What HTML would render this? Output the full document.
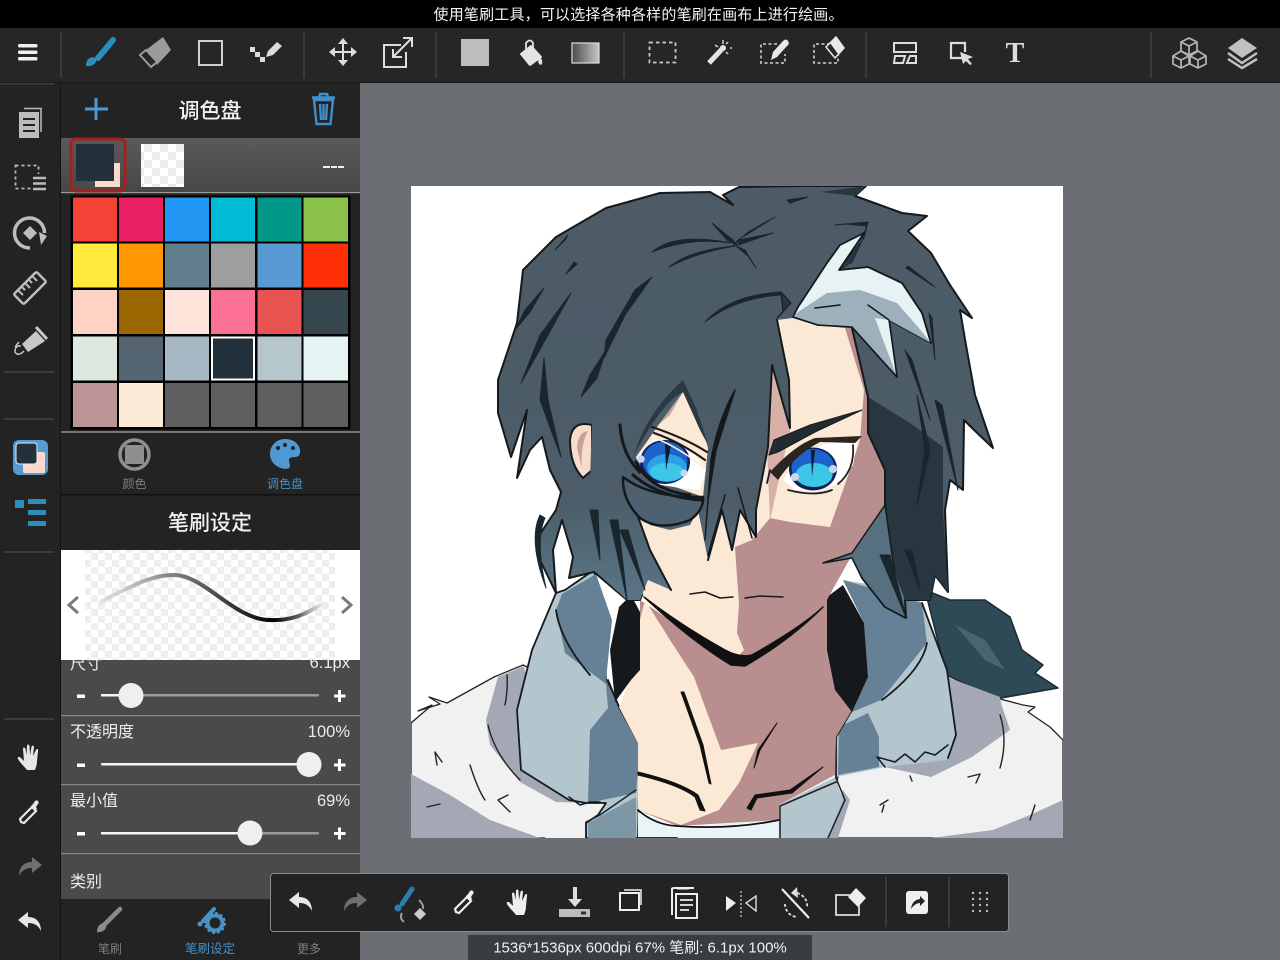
<!DOCTYPE html>
<html><head><meta charset="utf-8"><title>Paint</title>
<style>
html,body{margin:0;padding:0;background:#6b6f74;overflow:hidden}
svg{display:block}
text{font-family:"Liberation Sans","Noto Sans CJK SC",sans-serif}
</style></head><body>
<svg xmlns="http://www.w3.org/2000/svg" width="1280" height="960" viewBox="0 0 1280 960">
<defs>
<pattern id="chk" width="16" height="16" patternUnits="userSpaceOnUse"><rect width="16" height="16" fill="#fff"/><rect width="8" height="8" fill="#ececec"/><rect x="8" y="8" width="8" height="8" fill="#ececec"/></pattern>
<pattern id="chk2" width="14" height="14" patternUnits="userSpaceOnUse"><rect width="14" height="14" fill="#fff"/><rect width="7" height="7" fill="#eeeef2"/><rect x="7" y="7" width="7" height="7" fill="#eeeef2"/></pattern>
<linearGradient id="rowg" x1="0" x2="0" y1="0" y2="1"><stop offset="0" stop-color="#5a5a5a"/><stop offset="1" stop-color="#474747"/></linearGradient>
<linearGradient id="gradi" x1="0" x2="1" y1="0" y2="0"><stop offset="0" stop-color="#4a4a4a"/><stop offset="1" stop-color="#c8c8c8"/></linearGradient>
<linearGradient id="strk" gradientUnits="userSpaceOnUse" x1="100" x2="322" y1="0" y2="0"><stop offset="0" stop-color="#ccc" stop-opacity=".5"/><stop offset=".3" stop-color="#888"/><stop offset=".55" stop-color="#444"/><stop offset=".78" stop-color="#000"/><stop offset=".9" stop-color="#666"/><stop offset="1" stop-color="#ccc" stop-opacity=".5"/></linearGradient>
<linearGradient id="hairg" gradientUnits="userSpaceOnUse" x1="0" x2="0" y1="186" y2="620"><stop offset="0" stop-color="#4c5b66"/><stop offset=".72" stop-color="#4c5c68"/><stop offset="1" stop-color="#5c7b8c"/></linearGradient>
<clipPath id="art"><rect x="411" y="186" width="652" height="652"/></clipPath>
<symbol id="undo" viewBox="-14 -14 28 28" overflow="visible"><path d="M-12,-2 L-2,-10 L-2,-5 C6,-5 11,0 11,9 C8,3 4,1 -2,1 L-2,6 Z" fill="currentColor"/></symbol>
<symbol id="hand" viewBox="-14 -14 28 28" overflow="visible"><path d="M-3,13 C-6,9 -9,7 -12,2 C-13,0 -11,-1 -9,1 L-6,4 L-7,-8 C-7,-10 -5,-10 -4.500,-8 L-3.500,-2 L-3,-11 C-3,-13 -.5,-13 -.5,-11 L0,-2 L1.500,-10 C2,-12 4,-11.500 4,-10 L3,-1 L6,-7 C7,-9 8.500,-8 8,-6 L7,4 C7,8 6,10 5,13 Z" fill="currentColor"/></symbol>
<symbol id="drop" viewBox="-14 -14 28 28" overflow="visible"><path d="M-9,10 L-10,7 L2,-5 L6,-1 L-6,11 Z" fill="none" stroke="currentColor" stroke-width="2.200"/><path d="M1,-6 L3,-8 L5,-11 C7,-13 10,-10 8,-8 L6,-5 L7,-3 L5,-1 Z" fill="currentColor"/></symbol>
</defs>

<rect width="1280" height="960" fill="#6b6f74"/>
<!-- ARTWORK -->
<g clip-path="url(#art)" stroke-linejoin="round" stroke-linecap="round">
<rect x="411" y="186" width="652" height="652" fill="#fff"/>
<!-- tail -->
<path d="M925,590 L950,600 L985,600 L1010,617 L1022,650 L1043,665 L1035,673 L1058,688 L1001,698 L972,690 L947,677 Z" fill="#2f4a57" stroke="#1d2a30" stroke-width="1.500"/>
<path d="M955,625 L985,640 L1005,670 L985,660 Z" fill="#4a6572"/>
<!-- left fur -->
<path d="M411,723 L432,705 L418,711 L440,704 L429,697 L447,703 L494,677 L523,665 L600,700 L640,838 L411,838 Z" fill="#f1f1f1" stroke="#222" stroke-width="1.300"/>
<path d="M411,774 L450,795 L490,820 L540,838 L411,838 Z" fill="#a4a8b4"/>
<path d="M498,677 L524,666 L530,700 L521,770 L569,800 L590,803 L556,802 L520,782 L490,745 L486,720 Z" fill="#a5a9b6"/>
<path d="M560,808 L600,803 L586,838 L545,838 Z" fill="#f1f1f1"/>
<!-- right fur -->
<path d="M940,672 L993,697 L1023,705 L1035,707 L1028,712 L1050,727 L1063,740 L1063,838 L830,838 L838,775 Z" fill="#f1f1f1" stroke="#222" stroke-width="1.300"/>
<path d="M947,677 L1000,697 L1001,703 L1010,730 L972,757 L931,777 L885,767 L945,745 Z" fill="#a5a9b6"/>
<path d="M1063,800 L1030,815 L993,830 L931,838 L1063,838 Z" fill="#a4a8b4"/>
<path d="M843,790 L850,800 L838,838 L825,838 Z" fill="#a4a8b4"/>
<!-- hood left -->
<path d="M594,570 L565,590 L556,593 L532,650 L517,710 L521,770 L569,800 L586,803 L606,803 L598,815 L586,823 L586,838 L640,838 L640,745 L619,707 L606,680 L604,620 Z" fill="#b3c6cd" stroke="#151a1e" stroke-width="1.800"/>
<path d="M596,574 L562,594 L556,610 L565,653 L606,684 L608,708 L590,730 L588,803 L636,793 L640,745 L619,707 L606,680 L612,620 Z" fill="#668095"/>
<path d="M588,823 L636,797 L636,838 L588,838 Z" fill="#7d97a6"/>
<path d="M556,610 Q560,640 590,675 M608,680 L619,707 L640,745 L638,838" fill="none" stroke="#151a1e" stroke-width="1.800"/>
<!-- hood right -->
<path d="M843,580 L905,590 L922,603 L947,670 L956,730 L947,760 L885,767 L836,777 L836,727 L868,677 L864,623 Z" fill="#b3c6cd"/>
<path d="M843,580 L922,603 L927,643 L881,700 L852,712 L868,677 L864,623 Z" fill="#668095"/>
<path d="M839,727 L868,713 L879,737 L879,767 L838,775 Z" fill="#668095"/>
<path d="M922,603 L947,670 L956,735 L948,758 M927,643 Q922,670 882,700 M852,710 L836,737 L836,778" fill="none" stroke="#151a1e" stroke-width="1.800"/>
<!-- neck -->
<path d="M640,600 L640,670 L619,707 L638,743 L638,810 L677,826 L779,820 L779,805 L835,775 L836,737 L852,710 L830,650 L827,600 L760,640 L700,640 Z" fill="#b88e8e"/>
<path d="M645,600 L670,640 L694,677 L721,750 L758,743 L739,783 L719,810 L681,825 L638,810 L638,743 L619,707 L634,670 L640,620 Z" fill="#fce9d5"/>
<path d="M638,812 L677,827 L779,820 L779,838 L638,838 Z" fill="#e8f4f5"/>
<path d="M779,805 L835,777 L843,800 L827,838 L779,838 Z" fill="#b3c6cd"/>
<path d="M836,782 L780,806 L780,838 M836,778 L845,800 L828,838 M636,790 L600,815 L586,822 L586,838" fill="none" stroke="#1a2226" stroke-width="1.500"/>
<path d="M885,767 L877,757 L895,762 L905,754 L915,762 L925,752 L935,755 L948,745 M569,797 L580,805 L590,802 L600,802" fill="none" stroke="#151a1e" stroke-width="1.500"/>
<path d="M638,810 Q655,825 677,826 Q730,830 779,820 M638,838 L677,838" fill="none" stroke="#111" stroke-width="1.800"/>
<!-- black inner hood -->
<path d="M619,607 L610,650 L615,702 L631,680 L640,670 L640,612 L631,595 Z" fill="#15191c"/>
<path d="M827,597 L827,650 L835,690 L852,712 L868,677 L864,623 L843,585 Z" fill="#15191c"/>
<!-- neck lines -->
<path d="M681,692 L700,745 L709,783 L711,784 L703,745 L684,692 Z M777,723 L758,750 L754,768 L760,750 Z M638,775 Q680,785 695,797 L700,810 L705,811 L698,795 Q680,782 638,772 Z M823,767 L790,790 L755,795 L747,808 L751,810 L757,798 L792,793 Z" fill="#111" stroke="#111" stroke-width="1"/>
<path d="M437,765 L435,752 L442,762 M470,765 Q478,790 485,800 M508,795 L498,800 L510,812 M427,807 L440,804 M488,725 Q495,755 520,780 M507,675 Q508,690 505,705 M1000,715 Q1008,740 1000,768 M968,777 L980,774 L976,783 M880,805 L888,800 M884,805 L882,812 M1035,805 L1030,820 M910,776 L912,781" fill="none" stroke="#222" stroke-width="1.400"/>
<!-- hair silhouette -->
<path d="M710,192 L733,205 L723,195 L739,187 L800,186 L866,186 L855,196 L880,205 L902,213 L927,216 L908,231 L931,253 L950,285 L972,318 L960,310 L966,345 L975,395 L993,448 L972,428 L964,420 L963,490 L950,480 L945,510 L948,592 L935,575 L930,600 L905,600 L906,618 L885,607 L862,578 L852,556 L700,560 L671,590 L648,580 L640,600 L627,600 L594,572 L569,578 L573,557 L562,520 L553,550 L556,593 L540,560 L538,537 L556,510 L561,492 L550,470 L542,437 L530,450 L517,478 L527,410 L511,457 L498,413 L498,380 L517,323 L523,270 L556,237 L606,208 L660,193 Z" fill="url(#hairg)" stroke="#15191c" stroke-width="2"/>
<!-- dark right -->
<path d="M868,397 L910,423 L943,447 L943,510 L948,592 L935,575 L930,600 L905,600 L890,560 L868,500 L885,470 L868,433 Z" fill="#27363f"/>
<path d="M820,192 L866,186 L856,196 Z" fill="#27363f"/>
<!-- face -->
<path d="M777,320 L793,318 L818,325 L852,328 L868,395 L868,433 L885,470 L885,510 L852,555 L823,607 L745,665 L728,662 L644,597 L620,540 L640,400 L700,380 Z" fill="#b88e8e"/>
<path d="M777,320 L793,318 L818,325 L845,328 L864,390 L860,440 L850,470 L843,490 L830,527 L790,522 L770,518 L752,540 L735,547 L737,577 L739,603 L737,633 L744,650 L735,660 L644,597 L630,540 L650,500 L700,400 Z" fill="#fce9d5"/>
<path d="M777,320 L783,360 L790,430 L770,520 L765,400 Z" fill="#d7b0a8"/>
<!-- ear -->
<path d="M592,425 Q572,420 570,440 Q570,465 583,478 L592,470 Z" fill="#f7dccb" stroke="#15191c" stroke-width="2"/>
<path d="M577,448 Q578,432 588,431 Q580,445 582,468 Z" fill="#c9a09a"/>
<!-- bangs -->
<path d="M777,320 L789,380 L790,428 L772,365 L768,447 L756,510 L756,537 L740,510 L732,550 L722,510 L708,560 L698,510 L690,525 L670,530 L650,525 L632,500 L650,550 L671,590 L648,580 L640,600 L627,600 L596,572 L590,480 L592,420 L600,350 L680,300 L770,300 Z" fill="url(#hairg)"/>
<path d="M777,320 L789,380 L790,428 L772,365 L768,447 L756,510 L756,537 L740,510 L732,550 L722,510 L708,560 M671,590 L650,550 L632,500" fill="none" stroke="#15191c" stroke-width="2"/>
<path d="M777,318 L791,303 L781,292 L783,312 Z" fill="#27363f" stroke="#15191c" stroke-width="1"/>
<!-- right face edge -->
<path d="M852,328 L868,397 L868,433 L885,470 L885,510" fill="none" stroke="#15191c" stroke-width="2"/>
<path d="M885,505 L852,553 L823,563 L852,558 L862,578 L885,607 L906,618 L895,575 L890,540 Z" fill="#567080" stroke="#15191c" stroke-width="1.500"/>
<!-- left eye opening -->
<path d="M683,392 L660,423 L636,457 L656,480 L703,497 L708,448 L698,413 Z" fill="#fce9d5"/>
<path d="M683,392 L660,423 L650,432 L670,415 Z" fill="#c8a49c"/>
<path d="M683,392 Q662,402 634,455 L640,438 Q655,405 683,380 L697,410 L708,445 L700,430 Z" fill="#2a3a44"/>
<path d="M636,458 L655,438 L692,450 L706,470 L700,490 L680,488 L655,484 Z" fill="#fff"/>
<ellipse cx="665" cy="462" rx="25" ry="22" fill="#101f55"/>
<ellipse cx="665" cy="461" rx="22.500" ry="19.500" fill="#1e62cc"/>
<ellipse cx="667" cy="468" rx="20" ry="14" fill="#2ea0e4"/>
<ellipse cx="667" cy="472" rx="17" ry="9" fill="#3cc6e8"/>
<path d="M665,442 L671,445 L666,470 Z" fill="#101a30"/>
<circle cx="641" cy="459" r="3.800" fill="#ccd6e6"/><circle cx="684" cy="473" r="3.500" fill="#ccd6e6"/>
<path d="M652,427 Q685,438 707,452 M654,433 Q680,442 705,460" fill="none" stroke="#1f1a18" stroke-width="2.200"/>
<path d="M655,438 Q680,448 704,468" fill="none" stroke="#fbeed9" stroke-width="1.500"/>
<!-- eye patch -->
<path d="M623,477 Q650,498 703,497 Q704,510 690,520 Q660,532 640,518 Q622,500 623,477 Z" fill="#4e6170" stroke="#15191c" stroke-width="2.500"/>
<path d="M636,462 Q650,490 690,495 M620,425 Q622,455 640,472 M633,475 Q660,498 703,500" fill="none" stroke="#15191c" stroke-width="3"/>
<path d="M735,390 Q718,420 711,460 L705,540 L708,500 L716,450 Z M725,495 L708,555 M738,488 L752,538" fill="#15191c" stroke="#15191c" stroke-width="1.500"/>
<!-- right eye -->
<path d="M783,480 L800,455 L830,442 L857,443 L853,465 L840,483 L815,492 L795,490 Z" fill="#fff"/>
<ellipse cx="813" cy="469" rx="24" ry="21.500" fill="#101f55"/>
<ellipse cx="813" cy="468" rx="21.500" ry="19" fill="#1e62cc"/>
<ellipse cx="814" cy="475" rx="18.500" ry="12" fill="#3cc6e8"/>
<path d="M811,450 L815,450 L812,477 Z" fill="#101a30"/>
<circle cx="795" cy="477" r="4" fill="#ccd6e6"/><circle cx="833" cy="469" r="4" fill="#ccd6e6"/>
<path d="M769,455 L774,440 L810,425 L862,410 L815,432 L778,452 Z" fill="#232b30" stroke="#151a1e" stroke-width="1"/>
<path d="M770,472 Q795,445 815,438 L862,436 L855,443 L820,442 Q795,455 778,480" fill="#2b2522"/>
<path d="M853,445 Q855,470 838,484 M788,490 Q815,497 832,490 M770,470 L767,483" fill="none" stroke="#22201e" stroke-width="1.800"/>
<!-- hair lines: tapered strands -->
<g fill="#1a262d" stroke="#1a262d" stroke-width="1">
<path d="M652,252 Q675,232 731,243 Q690,237 652,252 Z"/>
<path d="M669,267 Q690,250 735,246 Q695,253 669,267 Z"/>
<path d="M712,223 L733,240 L737,245 L727,240 Z"/>
<path d="M775,217 L738,240 L733,246 L748,232 Z"/>
<path d="M773,233 L740,240 L738,245 Z"/>
<path d="M756,268 L745,250 L736,246 L748,256 Z"/>
<path d="M652,277 L635,290 L606,340 L604,358 L625,315 Z"/>
<path d="M606,350 L590,375 L581,397 L597,378 Z"/>
<path d="M544,288 L525,310 L515,330 L530,312 Z"/>
<path d="M571,293 L540,335 L521,383 L548,335 Z"/>
<path d="M544,358 L540,400 L561,457 L548,400 Z"/>
<path d="M565,240 L555,250 L568,235 Z"/>
<path d="M574,262 L566,274 L577,264 Z"/>
<path d="M705,322 Q730,295 781,292 L781,295 Q735,298 705,322 Z"/>
<path d="M906,268 L935,287 L908,266 Z"/>
<path d="M929,313 L935,360 L932,318 Z"/>
<path d="M835,225 L868,222 L866,226 L845,224 Z"/>
<path d="M868,222 L864,238 L839,270 L852,262 L860,245 Z" fill="#27363f"/>
<path d="M787,200 L808,197 L790,203 Z"/>
<path d="M905,350 L930,420 L912,360 Z"/>
<path d="M917,395 L925,450 L917,505 L930,450 Z"/>
<path d="M935,400 L958,490 L942,405 Z"/>
<path d="M905,550 L920,590 L912,550 Z"/>
<path d="M880,555 L905,615 L890,555 Z"/>
<path d="M610,520 L627,600 L618,520 Z"/>
<path d="M590,510 L600,560 L598,510 Z"/>
<path d="M620,530 L645,590 L628,530 Z"/>
<path d="M540,515 Q528,540 546,588 Q535,540 545,518 Z"/>
</g>
<!-- streak -->
<path d="M864,233 L840,245 L827,263 L798,307 L793,317 L818,325 L852,327 L897,377 L889,320 L931,343 L922,313 L902,283 L868,267 L839,270 Z" fill="#e6f2f3" stroke="#15191c" stroke-width="1.800"/>
<path d="M798,312 L827,293 L860,290 L897,303 L918,327 L931,343 L889,320 L897,377 L852,327 L818,325 L793,317 Z" fill="#9db0bb"/>
<path d="M897,377 L889,320 L875,318 L885,345 Z" fill="#e6f2f3"/>
<path d="M815,308 L840,305 M868,305 L889,320 M793,317 L818,325 L852,327 L897,377 L889,320 M840,270 L868,267 L902,283 L922,313 L931,343" fill="none" stroke="#15191c" stroke-width="1.500"/>
<!-- jaw -->
<path d="M644,597 Q690,640 731,665 L745,666 Q790,640 823,607 Q800,628 752,655 Q740,658 725,650 Q680,625 644,597 Z" fill="#111" stroke="#111" stroke-width="1.500"/>
<path d="M690,594 L705,592 L720,598 L733,597 M745,598 L760,596 L783,597" fill="none" stroke="#1a1a1a" stroke-width="1.500"/>
</g>

<!-- STATUS BAR + TOOLBAR -->
<rect width="1280" height="28" fill="#000"/>
<text x="638.500" y="19.500" text-anchor="middle" fill="#f5f5f5" font-size="15" textLength="410">使用笔刷工具，可以选择各种各样的笔刷在画布上进行绘画。</text>
<rect y="28" width="1280" height="54" fill="#262626"/>
<rect y="82" width="1280" height="1" fill="#1a1a1a"/>
<g fill="#3a3a3a"><rect x="60" y="32" width="2" height="46"/><rect x="303" y="32" width="2" height="46"/><rect x="435" y="32" width="2" height="46"/><rect x="623" y="32" width="2" height="46"/><rect x="865" y="32" width="2" height="46"/><rect x="1150" y="32" width="2" height="46"/></g>
<!-- menu -->
<g fill="#f0f0f0"><rect x="18" y="44" width="19.500" height="3.500" rx="1.500"/><rect x="18" y="50.500" width="19.500" height="3.500" rx="1.500"/><rect x="18" y="57" width="19.500" height="3.500" rx="1.500"/></g>
<!-- brush -->
<path d="M113,40 L98,58" stroke="#2a8fbe" stroke-width="6" stroke-linecap="round"/><path d="M86,66 Q86,58 93,57 Q97,58 96,62 Q93,67 86,66 Z" fill="#2a8fbe"/>
<!-- eraser -->
<path d="M163,37 L171,50 L157,65 L146,50 Z" fill="#9b9b9b"/><path d="M146,50 L157,62 L151,67 L140,55 Z" fill="#262626" stroke="#9b9b9b" stroke-width="2"/>
<!-- rect -->
<rect x="199" y="41" width="23" height="24" fill="none" stroke="#d0d0d0" stroke-width="2"/>
<!-- dots pencil -->
<g fill="#dcdcdc"><rect x="250" y="47" width="5" height="5"/><rect x="255" y="52" width="5" height="5"/><rect x="260" y="57" width="5" height="5"/><path d="M266,57 L268,51 L277,42 L282,46 L273,55 Z"/></g>
<!-- move -->
<path d="M343,41 V63 M332,52 H354" stroke="#ddd" stroke-width="2"/><path d="M343,38 L338,44 H348 Z M343,66 L338,60 H348 Z M329,52 L335,47 V57 Z M357,52 L351,47 V57 Z" fill="#ddd"/>
<!-- export -->
<path d="M401,45 H384 V67 H406 V52" fill="none" stroke="#ddd" stroke-width="2"/><path d="M393,57 L411,39 M403,38 H412 V47 M393,49 V57 H402" fill="none" stroke="#ddd" stroke-width="2"/>
<!-- fill -->
<rect x="461" y="39" width="28" height="27" fill="#bdbdbd"/>
<!-- bucket -->
<path d="M521,54 L531,46 L541,57 L530,65 Z" fill="#e4e4e4" stroke="#e4e4e4" stroke-width="2" stroke-linejoin="round"/><path d="M526,49 V43 Q530,38 533,43 V50" fill="none" stroke="#e4e4e4" stroke-width="1.800"/><path d="M540,57 Q544,62 541,65 Q536,63 540,57 Z" fill="#e4e4e4"/>
<!-- gradient -->
<rect x="572" y="43" width="27" height="20" fill="url(#gradi)" stroke="#ddd" stroke-width="1.200"/>
<!-- select -->
<rect x="649.500" y="42.500" width="26" height="20" fill="none" stroke="#ccc" stroke-width="1.800" stroke-dasharray="3.500 3"/>
<!-- wand -->
<path d="M709,63 L723,48" stroke="#e4e4e4" stroke-width="5"/><g stroke="#d0d0d0" stroke-width="1.500"><path d="M723,40 V44 M730,48 H732 M715,45 L718,47 M728,42 L726,44 M728,54 L726,52"/></g><circle cx="723" cy="48" r="3" fill="#e4e4e4"/>
<!-- sel pencil -->
<path d="M777,44 H761 V63 H785 V54" fill="none" stroke="#bbb" stroke-width="1.800" stroke-dasharray="3 2.500"/><path d="M771,60 L773,52 L783,41 Q786,38 788,41 Q790,44 787,46 L777,57 Z" fill="#e8e8e8"/>
<!-- sel eraser -->
<path d="M830,44 H814 V63 H838 V54" fill="none" stroke="#bbb" stroke-width="1.800" stroke-dasharray="3 2.500"/><path d="M836,37 L844,48 L835,58 L826,47 Z" fill="#262626" stroke="#e8e8e8" stroke-width="1.500"/><path d="M836,37 L844,48 L838,54 L830,43 Z" fill="#e8e8e8"/>
<!-- layout -->
<path d="M894,43 H916 V52 H894 Z M895,56 H905 L903,63 H894 Z M910,56 H916 V63 H907 Z" fill="none" stroke="#ddd" stroke-width="2"/>
<!-- cursor -->
<path d="M962,58 H951 V43 H965 V52" fill="none" stroke="#ddd" stroke-width="2.200"/><path d="M960,52 L973,57 L968,59 L972,64 L970,65 L966,61 L963,64 Z" fill="#ddd"/>
<!-- T -->
<text x="1015" y="62" text-anchor="middle" fill="#ddd" font-size="28" font-weight="bold" style="font-family:'Liberation Serif',serif">T</text>
<!-- cubes -->
<g fill="none" stroke="#b5b5b5" stroke-width="1.700" stroke-linejoin="round"><path d="M1189,38 L1197,42 V51 L1189,55 L1181,51 V42 Z M1181,42 L1189,46 L1197,42 M1189,46 V55"/><path d="M1181,51 L1189,56 V64 L1181,68 L1173,64 V56 Z M1173,56 L1181,60 L1189,56 M1181,60 V68"/><path d="M1198,51 L1206,56 V64 L1198,68 L1190,64 V56 Z M1190,56 L1198,60 L1206,56 M1198,60 V68"/></g>
<!-- layers -->
<path d="M1242,38 L1257,48 L1242,58 L1228,48 Z" fill="#c0c0c0"/><path d="M1228,53 L1242,63 L1257,53 M1228,59 L1242,68 L1257,59" fill="none" stroke="#c0c0c0" stroke-width="2.500"/>

<!-- LEFT SIDEBAR -->
<rect y="83" width="60" height="877" fill="#232323"/>
<rect x="60" y="83" width="1.500" height="877" fill="#141414"/>
<rect y="83" width="54" height="1.500" fill="#3c3c3c"/>
<g fill="#3c3c3c"><rect x="4" y="371" width="50" height="2"/><rect x="4" y="418" width="50" height="2"/><rect x="4" y="551" width="50" height="2"/><rect x="4" y="718" width="50" height="2"/></g>
<rect x="19" y="112" width="20" height="26" fill="#bcbcbc"/><path d="M23,119 H35 M23,125 H35 M23,131 H35" stroke="#232323" stroke-width="2"/><path d="M24,108.500 H41 V132" fill="none" stroke="#bcbcbc" stroke-width="1.500"/>
<rect x="15.500" y="165.500" width="23" height="23" fill="none" stroke="#bbb" stroke-width="1.800" stroke-dasharray="3 3"/><rect x="32" y="174" width="15" height="17" fill="#232323"/><path d="M33,178 H46 M33,183.500 H46 M33,189 H46" stroke="#bbb" stroke-width="2.400"/>
<path d="M44.500,233 A15,15 0 1 0 30,248" fill="none" stroke="#bdbdbd" stroke-width="3.500"/><path d="M30,226 L37,233 L30,240 L23,233 Z" fill="#bdbdbd"/><path d="M39,232 L47,236 L41,245 Z" fill="#bdbdbd"/>
<g transform="translate(30,288) rotate(-45)"><rect x="-16" y="-7" width="32" height="14" rx="1.500" fill="none" stroke="#bdbdbd" stroke-width="2.500"/><path d="M-10,-6 V0 M-5,-6 V-2 M0,-6 V0 M5,-6 V-2 M10,-6 V0" stroke="#bdbdbd" stroke-width="2"/></g>
<path d="M22,344 L36,331 L45,341 L28,352 Z" fill="#c8c8c8"/><path d="M36,327 L47,339" fill="none" stroke="#c8c8c8" stroke-width="3"/><path d="M21,346 Q15,345 15,352 Q18,357 24,351 M15,347 L19,342" fill="none" stroke="#c8c8c8" stroke-width="1.500"/>
<rect x="13" y="440" width="35" height="35" rx="6" fill="#549bd4"/><rect x="23" y="452" width="22" height="21" rx="2" fill="#fdd9cc"/><rect x="16" y="443" width="21" height="21" rx="3" fill="#22313d" stroke="#e8eef2" stroke-width="1"/>
<g fill="#2b8fbc"><rect x="15" y="500" width="9" height="8"/><rect x="28" y="499" width="18" height="5"/><rect x="28" y="510" width="18" height="5"/><rect x="28" y="521" width="18" height="5"/></g>
<use href="#hand" x="16" y="743" width="28" height="28" color="#e6e6e6"/>
<use href="#drop" x="16" y="798" width="28" height="28" color="#e6e6e6"/>
<use href="#undo" transform="translate(60,0) scale(-1,1)" x="16" y="853" width="28" height="28" color="#6f6f6f"/>
<use href="#undo" x="16" y="908" width="28" height="28" color="#e6e6e6"/>

<!-- PANEL -->
<rect x="61" y="83" width="299" height="877" fill="#232323"/>
<path d="M85,109 H108 M96,98 V120" stroke="#4a9ad4" stroke-width="3"/>
<text x="210" y="118" text-anchor="middle" fill="#f2f2f2" font-size="21" font-weight="500">调色盘</text>
<path d="M314,100 H333 L330.500,124 H316.500 Z M312,97.500 H335 M319,97 L320,94 H327 L328,97 M320,104 L321,120 M323.500,104 V120 M327,104 L326,120" fill="none" stroke="#3f8fc9" stroke-width="2.400"/>
<rect x="61" y="138" width="299" height="55" fill="url(#rowg)"/>
<rect x="61" y="192" width="299" height="1.200" fill="#999"/>
<rect x="71" y="139" width="54" height="52" rx="5" fill="none" stroke="#a51f1f" stroke-width="3"/>
<rect x="95" y="163" width="25" height="24" fill="#fdd9cc"/><rect x="76" y="144" width="38" height="37" fill="#22303b"/>
<rect x="141" y="144" width="43" height="43" fill="url(#chk)"/>
<path d="M323,167 H330 M331,167 H337 M338,167 H344" stroke="#eee" stroke-width="2"/>
<!-- palette -->
<rect x="70.500" y="195.500" width="280" height="234" fill="#000"/>
<g>
<rect x="73" y="197.500" width="44" height="44" fill="#f44336"/><rect x="119" y="197.500" width="44" height="44" fill="#e91e63"/><rect x="165" y="197.500" width="44" height="44" fill="#2196f3"/><rect x="211" y="197.500" width="44" height="44" fill="#00bcd4"/><rect x="257.500" y="197.500" width="44" height="44" fill="#009688"/><rect x="303.500" y="197.500" width="44.500" height="44" fill="#8bc34a"/>
<rect x="73" y="243.500" width="44" height="44" fill="#ffeb3b"/><rect x="119" y="243.500" width="44" height="44" fill="#ff9800"/><rect x="165" y="243.500" width="44" height="44" fill="#607d8b"/><rect x="211" y="243.500" width="44" height="44" fill="#9e9e9e"/><rect x="257.500" y="243.500" width="44" height="44" fill="#5a9ad4"/><rect x="303.500" y="243.500" width="44.500" height="44" fill="#ff3008"/>
<rect x="73" y="290" width="44" height="44" fill="#ffd2c6"/><rect x="119" y="290" width="44" height="44" fill="#996600"/><rect x="165" y="290" width="44" height="44" fill="#ffe3da"/><rect x="211" y="290" width="44" height="44" fill="#fb7094"/><rect x="257.500" y="290" width="44" height="44" fill="#e8524f"/><rect x="303.500" y="290" width="44.500" height="44" fill="#37474f"/>
<rect x="73" y="336.500" width="44" height="44" fill="#dce7df"/><rect x="119" y="336.500" width="44" height="44" fill="#546470"/><rect x="165" y="336.500" width="44" height="44" fill="#a6b8c3"/><rect x="212" y="337.500" width="42" height="42" fill="#22303b" stroke="#fff" stroke-width="2"/><rect x="257.500" y="336.500" width="44" height="44" fill="#b5c7cc"/><rect x="303.500" y="336.500" width="44.500" height="44" fill="#e5f3f3"/>
<rect x="73" y="383" width="44" height="44" fill="#bb9595"/><rect x="119" y="383" width="44" height="44" fill="#fcebd7"/><rect x="165" y="383" width="44" height="44" fill="#5f5f5f"/><rect x="211" y="383" width="44" height="44" fill="#5f5f5f"/><rect x="257.500" y="383" width="44" height="44" fill="#5f5f5f"/><rect x="303.500" y="383" width="44.500" height="44" fill="#5f5f5f"/>
</g>
<rect x="61" y="431" width="299" height="2" fill="#777"/>
<!-- palette tabs -->
<circle cx="134.500" cy="454.500" r="14.500" fill="none" stroke="#8f8f8f" stroke-width="3.500"/><rect x="125" y="445" width="19" height="19" rx="2" fill="#8f8f8f"/>
<text x="134.500" y="488" text-anchor="middle" fill="#7f7f7f" font-size="12">颜色</text>
<path d="M285,439 C296,439 301,447 300,453 C299,459 293,456 290,458 C287,460 292,465 289,468 C284,471 270,466 270,454 C270,445 277,439 285,439 Z" fill="#4f98d2"/>
<g fill="#232323"><circle cx="278" cy="448" r="2"/><circle cx="285" cy="445" r="2"/><circle cx="293" cy="448" r="2"/></g>
<text x="285" y="488" text-anchor="middle" fill="#4a90c4" font-size="12">调色盘</text>
<rect x="61" y="494" width="299" height="1.500" fill="#111"/>
<text x="210" y="530" text-anchor="middle" fill="#f2f2f2" font-size="21" font-weight="500">笔刷设定</text>

<!-- SLIDERS -->
<rect x="61" y="660" width="299" height="239" fill="#4a4a4a"/>
<g fill="#ececec" font-size="16">
<text x="70" y="669">尺寸</text><text x="350" y="668" text-anchor="end" font-size="16.500">6.1px</text>
<text x="70" y="737">不透明度</text><text x="350" y="737" text-anchor="end" font-size="16.500">100%</text>
<text x="70" y="806">最小值</text><text x="350" y="806" text-anchor="end" font-size="16.500">69%</text>
<text x="70" y="887">类别</text>
</g>
<g fill="#888"><rect x="61" y="715" width="299" height="1.200"/><rect x="61" y="784" width="299" height="1.200"/><rect x="61" y="853" width="299" height="1.200"/></g>
<g fill="#fff">
<rect x="77" y="694.500" width="8" height="3.500"/><rect x="77" y="763.500" width="8" height="3.500"/><rect x="77" y="832" width="8" height="3.500"/>
<path d="M334,694.500 h4 v-4.500 h3 v4.500 h4.500 v3 h-4.500 v4.500 h-3 v-4.500 h-4 Z"/>
<path d="M334,763.500 h4 v-4.500 h3 v4.500 h4.500 v3 h-4.500 v4.500 h-3 v-4.500 h-4 Z"/>
<path d="M334,832 h4 v-4.500 h3 v4.500 h4.500 v3 h-4.500 v4.500 h-3 v-4.500 h-4 Z"/>
</g>
<rect x="101" y="694" width="218" height="2.500" rx="1" fill="#9a9a9a"/><rect x="101" y="694" width="30" height="2.500" fill="#f5f5f5"/>
<rect x="101" y="763" width="208" height="2.500" rx="1" fill="#f5f5f5"/>
<rect x="101" y="832" width="218" height="2.500" rx="1" fill="#9a9a9a"/><rect x="101" y="832" width="149" height="2.500" fill="#f5f5f5"/>
<g fill="#eef0ee"><circle cx="131" cy="695.500" r="12.500"/><circle cx="309" cy="764.500" r="12.500"/><circle cx="250" cy="833" r="12.500"/></g>

<!-- PREVIEW -->
<rect x="61" y="550" width="299" height="110" fill="#fff"/>
<rect x="85" y="550" width="250" height="110" fill="url(#chk2)"/>
<path d="M100,602 C125,590 150,574 175,575 C205,576 235,620 270,620 C290,621 305,615 322,604" fill="none" stroke="url(#strk)" stroke-width="4"/>
<path d="M78,597 L69,605 L78,613 M342,597 L351,605 L342,613" fill="none" stroke="#7a7a7a" stroke-width="3"/>

<!-- BOTTOM NAV -->
<rect x="61" y="899" width="299" height="61" fill="#232323"/>
<path d="M120,909 L104,925" stroke="#8c8c8c" stroke-width="4.500" stroke-linecap="round"/><path d="M97,932 Q97,925 103,923 Q107,924 106,928 Q103,933 97,932 Z" fill="#8c8c8c"/>
<path d="M214,909 L203,921" stroke="#4a92c4" stroke-width="4" stroke-linecap="round"/><circle cx="200" cy="924" r="2.500" fill="#4a92c4"/>
<circle cx="215" cy="923" r="7.500" fill="none" stroke="#4a92c4" stroke-width="4"/><circle cx="215" cy="923" r="10" fill="none" stroke="#4a92c4" stroke-width="2" stroke-dasharray="3 2.200"/>
<text x="110" y="953" text-anchor="middle" fill="#7f7f7f" font-size="12">笔刷</text>
<text x="210" y="953" text-anchor="middle" fill="#4a90c4" font-size="12.500">笔刷设定</text>
<text x="309" y="953" text-anchor="middle" fill="#7f7f7f" font-size="12">更多</text>

<!-- FLOAT TOOLBAR -->
<rect x="270.500" y="873.500" width="738" height="58" rx="3" fill="#232323" stroke="#8a8a8a" stroke-width="1"/>
<g fill="#3a3a3a"><rect x="885" y="877" width="2" height="50"/><rect x="948" y="877" width="2" height="50"/></g>
<use href="#undo" x="287" y="888" width="28" height="28" color="#e6e6e6"/>
<use href="#undo" transform="translate(710,0) scale(-1,1)" x="341" y="888" width="28" height="28" color="#6f6f6f"/>
<path d="M412,889 L402,904" stroke="#2a7fa8" stroke-width="5" stroke-linecap="round"/><circle cx="398" cy="908" r="3.500" fill="#2a7fa8"/>
<path d="M419,900 Q424,905 423,909 M404,922 Q399,918 402,913" fill="none" stroke="#999" stroke-width="2"/><path d="M420,908 L426,914 L420,920 L414,914 Z" fill="#ccc"/>
<use href="#drop" x="451" y="888" width="28" height="28" color="#eee"/>
<use href="#hand" x="505" y="888" width="28" height="28" color="#eee"/>
<path d="M575,887 V901" stroke="#ddd" stroke-width="4"/><path d="M568,899 H582 L575,907 Z" fill="#ddd"/>
<rect x="559" y="909" width="31" height="8" fill="#bcbcbc"/><rect x="581" y="911.500" width="5" height="3" fill="#333"/>
<rect x="620" y="893" width="19" height="17" fill="none" stroke="#f0f0f0" stroke-width="2"/><path d="M624,890 H641 V905" fill="none" stroke="#f0f0f0" stroke-width="1.500"/>
<path d="M672,915 V889 Q672,888 674,888 H694" fill="none" stroke="#eee" stroke-width="2"/><rect x="677" y="887" width="12" height="2.500" fill="#eee"/><rect x="676" y="894" width="21" height="24" fill="#232323" stroke="#eee" stroke-width="2"/><path d="M680,900 H693 M680,905 H693 M680,910 H689" stroke="#eee" stroke-width="1.800"/>
<path d="M726,896 L736,903 L726,911 Z" fill="#eee"/><path d="M756,896 L746,903 L756,911 Z" fill="none" stroke="#ddd" stroke-width="1.400"/><path d="M741,891 V917" stroke="#ddd" stroke-width="1.200" stroke-dasharray="2 2"/>
<path d="M785,904 A13,13 0 0 0 797,917 M792,893 A13,13 0 0 1 807,908" fill="none" stroke="#ddd" stroke-width="1.800" stroke-dasharray="3 2"/><path d="M797,887 L791,893 L798,898 Z" fill="#ddd"/><path d="M782,889 L809,918" stroke="#eee" stroke-width="2.200"/>
<path d="M850,895 H836 V915 H859 V905" fill="none" stroke="#ddd" stroke-width="1.800"/><path d="M856,888 L866,898 L858,907 L848,897 Z" fill="#eee"/>
<rect x="906" y="891" width="22" height="23" rx="3" fill="#eee"/><path d="M911,909 Q912,900 920,899 V896 L925,901 L920,906 V903 Q915,903 911,909 Z" fill="#232323"/>
<g fill="#bbb"><circle cx="973" cy="893" r="1.200"/><circle cx="980" cy="893" r="1.200"/><circle cx="987" cy="893" r="1.200"/><circle cx="973" cy="899" r="1.200"/><circle cx="980" cy="899" r="1.200"/><circle cx="987" cy="899" r="1.200"/><circle cx="973" cy="905" r="1.200"/><circle cx="980" cy="905" r="1.200"/><circle cx="987" cy="905" r="1.200"/><circle cx="973" cy="911" r="1.200"/><circle cx="980" cy="911" r="1.200"/><circle cx="987" cy="911" r="1.200"/></g>

<!-- INFO BAR -->
<path d="M468,935 H812 V960 H468 Z" fill="#3a3d40"/>
<text x="640" y="952.500" text-anchor="middle" fill="#f0f0f0" font-size="15">1536*1536px 600dpi 67% 笔刷: 6.1px 100%</text>
</svg>
</body></html>
